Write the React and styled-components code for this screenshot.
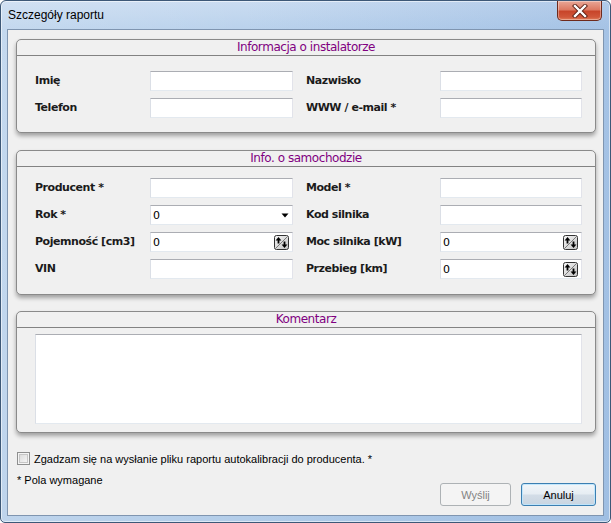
import React from 'react';
import styled, { createGlobalStyle } from 'styled-components';

const Global = createGlobalStyle`
  html, body { margin: 0; padding: 0; background: #ffffff; }
  body { width: 611px; height: 523px; overflow: hidden; }
  * { box-sizing: border-box; }
`;

const Window = styled.div`
  width: 611px;
  height: 523px;
  border: 1px solid #3d5877;
  border-radius: 6px 6px 5px 5px;
  background:
    linear-gradient(to right, rgba(255,255,255,0.15), rgba(255,255,255,0) 40%, rgba(90,140,205,0.22)),
    linear-gradient(to bottom, #cadcf1 0px, #bad2ec 28px, #b3cde9 100%);
  box-shadow: inset 0 0 0 1px rgba(255,255,255,0.55);
  display: flex;
  flex-direction: column;
  padding: 0 6px 6px 6px;
  font-family: "Liberation Sans", Arial, sans-serif;
`;

const TitleBar = styled.div`
  height: 28px;
  display: flex;
  align-items: flex-start;
  justify-content: space-between;
`;

const Title = styled.div`
  padding-left: 1px;
  margin-top: 6px;
  font-size: 12px;
  line-height: 16px;
  color: #000;
`;

const CloseButton = styled.div`
  width: 45px;
  height: 20px;
  margin-right: 2px;
  border: 1px solid #6e2a1c;
  border-top: none;
  border-radius: 0 0 5px 5px;
  background: linear-gradient(to bottom, #e9a797 0%, #dd7a63 45%, #c8452a 55%, #d0573a 85%, #e27f5c 100%);
  box-shadow: inset 0 0 0 1px rgba(255,255,255,0.35);
  display: flex;
  align-items: center;
  justify-content: center;
`;

const Client = styled.div`
  width: 597px;
  height: 487px;
  border: 1px solid #7f95b0;
  background: #f0f0f0;
  padding: 9px 7px 9px 8px;
  display: flex;
  flex-direction: column;
`;

const Section = styled.section`
  width: 580px;
  border: 1px solid #8a8a8a;
  border-radius: 5px;
  background: #f0f0f0;
  box-shadow: 0 3px 4px rgba(0,0,0,0.33);
  margin-top: ${p => p.$mt || 0}px;
`;

const SectionHeader = styled.div`
  height: 16px;
  border-bottom: 1px solid #828282;
  display: flex;
  align-items: center;
  justify-content: center;
  font-family: "DejaVu Sans", Verdana, sans-serif;
  font-size: 12px;
  letter-spacing: -0.45px;
  color: #800080;
  line-height: 15px;
`;

const SectionBody = styled.div`
  padding: ${p => p.$pt}px 13px ${p => p.$pb}px 18px;
  display: flex;
  flex-direction: column;
  gap: 7px;
`;

const Row = styled.div`
  display: flex;
  gap: 13px;
  height: 20px;
`;

const Pair = styled.div`
  display: flex;
  align-items: center;
`;

const Label = styled.div`
  width: ${p => p.$w}px;
  margin-top: -1px;
  font-family: "DejaVu Sans", Verdana, sans-serif;
  font-weight: bold;
  font-size: 11px;
  letter-spacing: -0.45px;
  color: #1b1b1b;
  white-space: nowrap;
`;

const Field = styled.div`
  width: ${p => p.$w}px;
  height: ${p => p.$h || 20}px;
  background: #ffffff;
  border: 1px solid;
  border-color: #abadb3 #e2e3ea #e3e9ef #dbdfe6;
  display: flex;
  align-items: center;
  justify-content: space-between;
  padding: 0 3px 0 2px;
  font-family: "DejaVu Sans", Tahoma, sans-serif;
  font-size: 11px;
  letter-spacing: -0.3px;
  color: #000;
`;

const CheckRow = styled.div`
  margin-top: 19px;
  margin-left: 1px;
  display: flex;
  align-items: center;
  gap: 4px;
  height: 13px;
  font-size: 11px;
  color: #000;
`;

const CheckBox = styled.div`
  width: 13px;
  height: 13px;
  border: 1px solid #8e8f8f;
  box-shadow: inset 0 0 0 1px #f4f4f4, inset 0 0 0 2px #c6c6c6;
  background-image: linear-gradient(135deg, #d6d6d6, #fafafa);
`;

const BottomRow = styled.div`
  margin-top: 7px;
  display: flex;
  justify-content: space-between;
  align-items: flex-start;
`;

const Note = styled.div`
  margin-left: 1px;
  font-size: 11px;
  line-height: 16px;
  color: #000;
`;

const Buttons = styled.div`
  margin-top: 11px;
  display: flex;
  gap: 10px;
`;

const Button = styled.div`
  width: ${p => p.$w}px;
  height: 23px;
  border-radius: 3px;
  display: flex;
  align-items: center;
  justify-content: center;
  font-size: 11px;
  border: 1px solid ${p => (p.$disabled ? '#adb2b5' : '#3c7fb1')};
  color: ${p => (p.$disabled ? '#838383' : '#000')};
  background: ${p => p.$disabled
    ? '#f4f4f4'
    : 'linear-gradient(to bottom, #f2f6f9 0%, #e6edf3 48%, #d3dde7 52%, #c9d5e1 100%)'};
  box-shadow: ${p => (p.$disabled ? 'none' : 'inset 0 0 0 1px rgba(190,230,253,0.9)')};
`;

const CloseIcon = () => (
  <svg width="16" height="14" viewBox="0 0 16 14">
    <path d="M3 2 L13 12 M13 2 L3 12" stroke="#5a1d12" strokeWidth="4.2" strokeLinecap="square" />
    <path d="M3 2 L13 12 M13 2 L3 12" stroke="#ffffff" strokeWidth="2.4" strokeLinecap="square" />
  </svg>
);

const DropArrow = () => (
  <svg width="8" height="5" viewBox="0 0 8 5">
    <path d="M0.5 0.5 H7.5 L4 4.5 Z" fill="#000" />
  </svg>
);

const SpinIcon = () => (
  <svg width="15" height="15" viewBox="0 0 15 15">
    <defs>
      <linearGradient id="spg" x1="0" y1="0" x2="1" y2="1">
        <stop offset="0" stopColor="#f6f6f6" />
        <stop offset="1" stopColor="#c2c2c2" />
      </linearGradient>
    </defs>
    <rect x="0.5" y="0.5" width="14" height="14" rx="2" fill="url(#spg)" stroke="#333" />
    <path d="M1.5 13.5 L13.5 1.5" stroke="#7a7a7a" strokeWidth="1" />
    <path d="M4.5 4 V8.5" stroke="#000" strokeWidth="1.8" />
    <path d="M1.6 5.4 L4.5 2 L7.4 5.4 Z" fill="#000" />
    <path d="M10.5 6.5 V11" stroke="#000" strokeWidth="1.8" />
    <path d="M7.6 9.6 L10.5 13 L13.4 9.6 Z" fill="#000" />
  </svg>
);

const Input = ({ w, value, kind }) => (
  <Field $w={w}>
    <span>{value}</span>
    {kind === 'select' && <DropArrow />}
    {kind === 'spin' && <SpinIcon />}
  </Field>
);

const FieldPair = ({ label, lw, iw, value, kind }) => (
  <Pair>
    <Label $w={lw}>{label}</Label>
    <Input w={iw} value={value} kind={kind} />
  </Pair>
);

const FormRow = ({ left, right }) => (
  <Row>
    <FieldPair lw={115} iw={143} {...left} />
    <FieldPair lw={134} iw={142} {...right} />
  </Row>
);

export default function App() {
  return (
    <>
      <Global />
      <Window>
        <TitleBar>
          <Title>Szczegóły raportu</Title>
          <CloseButton><CloseIcon /></CloseButton>
        </TitleBar>
        <Client>
          <Section>
            <SectionHeader>Informacja o instalatorze</SectionHeader>
            <SectionBody $pt={15} $pb={14}>
              <FormRow left={{ label: 'Imię' }} right={{ label: 'Nazwisko' }} />
              <FormRow left={{ label: 'Telefon' }} right={{ label: 'WWW / e-mail *' }} />
            </SectionBody>
          </Section>

          <Section $mt={17}>
            <SectionHeader>Info. o samochodzie</SectionHeader>
            <SectionBody $pt={11} $pb={15}>
              <FormRow left={{ label: 'Producent *' }} right={{ label: 'Model *' }} />
              <FormRow left={{ label: 'Rok *', value: '0', kind: 'select' }} right={{ label: 'Kod silnika' }} />
              <FormRow
                left={{ label: 'Pojemność [cm3]', value: '0', kind: 'spin' }}
                right={{ label: 'Moc silnika [kW]', value: '0', kind: 'spin' }}
              />
              <FormRow left={{ label: 'VIN' }} right={{ label: 'Przebieg [km]', value: '0', kind: 'spin' }} />
            </SectionBody>
          </Section>

          <Section $mt={16}>
            <SectionHeader>Komentarz</SectionHeader>
            <SectionBody $pt={6} $pb={8}>
              <Field $w={547} $h={90} />
            </SectionBody>
          </Section>

          <CheckRow>
            <CheckBox />
            <span>Zgadzam się na wysłanie pliku raportu autokalibracji do producenta. *</span>
          </CheckRow>

          <BottomRow>
            <Note>* Pola wymagane</Note>
            <Buttons>
              <Button $w={71} $disabled>Wyślij</Button>
              <Button $w={75}>Anuluj</Button>
            </Buttons>
          </BottomRow>
        </Client>
      </Window>
    </>
  );
}
